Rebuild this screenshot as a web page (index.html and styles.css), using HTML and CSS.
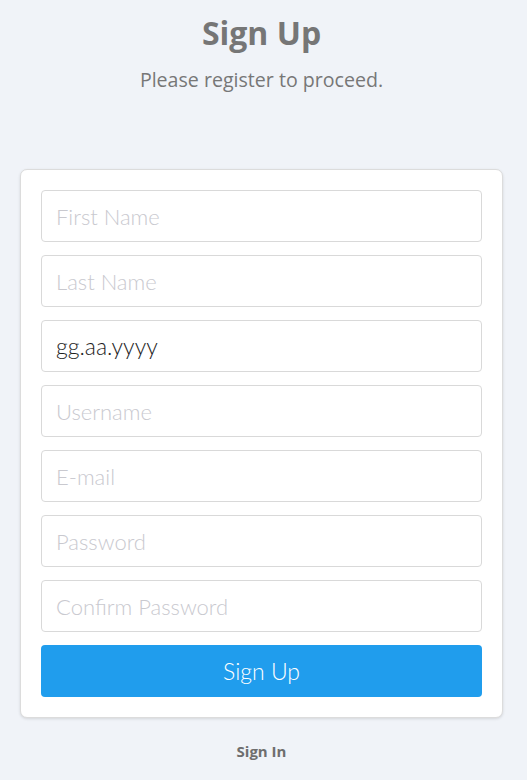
FILE: index.html
```html
<!DOCTYPE html>
<html>
<head>
<meta charset="utf-8">
<link rel="stylesheet" href="styles.css">
</head>
<body>
<div class="page">
  <header class="head">
    <h1 class="title">Sign Up</h1>
    <p class="subtitle">Please register to proceed.</p>
  </header>
  <form class="card">
    <input class="field" type="text" placeholder="First Name">
    <input class="field" type="text" placeholder="Last Name">
    <input class="field field-date" type="text" value="gg.aa.yyyy">
    <input class="field" type="text" placeholder="Username">
    <input class="field" type="text" placeholder="E-mail">
    <input class="field" type="text" placeholder="Password">
    <input class="field" type="text" placeholder="Confirm Password">
    <button class="submit" type="button">Sign Up</button>
  </form>
  <a class="signin">Sign In</a>
</div>
</body>
</html>
```
FILE: styles.css
```css
html, body {
  margin: 0;
  padding: 0;
  background: #f0f3f8;
}
.page {
  display: flex;
  flex-direction: column;
  align-items: center;
  padding: 0 24px 0 20px;
  font-family: "Open Sans", sans-serif;
}
.head {
  display: flex;
  flex-direction: column;
  align-items: center;
}
.title {
  margin: 12px 0 0 0;
  font-size: 32px;
  line-height: 42px;
  font-weight: 700;
  color: #767676;
}
.subtitle {
  margin: 13px 0 0 0;
  font-size: 19.6px;
  line-height: 26px;
  color: #777;
}
.card {
  margin-top: 76px;
  align-self: stretch;
  background: #fff;
  border: 1px solid #dcdcdc;
  border-radius: 7px;
  box-shadow: 0 1px 3px rgba(0,0,0,0.12);
  padding: 20px;
  display: flex;
  flex-direction: column;
  gap: 13px;
}
.field {
  box-sizing: border-box;
  height: 52px;
  width: 100%;
  border: 1px solid #d9d9d9;
  border-radius: 4px;
  padding: 0 14px;
  font-family: "Lato", sans-serif;
  font-weight: 300;
  font-size: 22px;
  color: #333;
  background: #fff;
  outline: none;
}
.field::placeholder {
  color: #c9c9cf;
  font-weight: 300;
}
.field-date {
  font-weight: 300;
  font-size: 23px;
  color: #1e1e1e;
}
.submit {
  height: 52px;
  border: none;
  border-radius: 4px;
  background: #209ded;
  color: #fff;
  font-family: "Lato", sans-serif;
  font-weight: 300;
  font-size: 23px;
}
.signin {
  margin-top: 23px;
  font-size: 15px;
  font-weight: 700;
  color: #6e6e6e;
  line-height: 20px;
}
```
